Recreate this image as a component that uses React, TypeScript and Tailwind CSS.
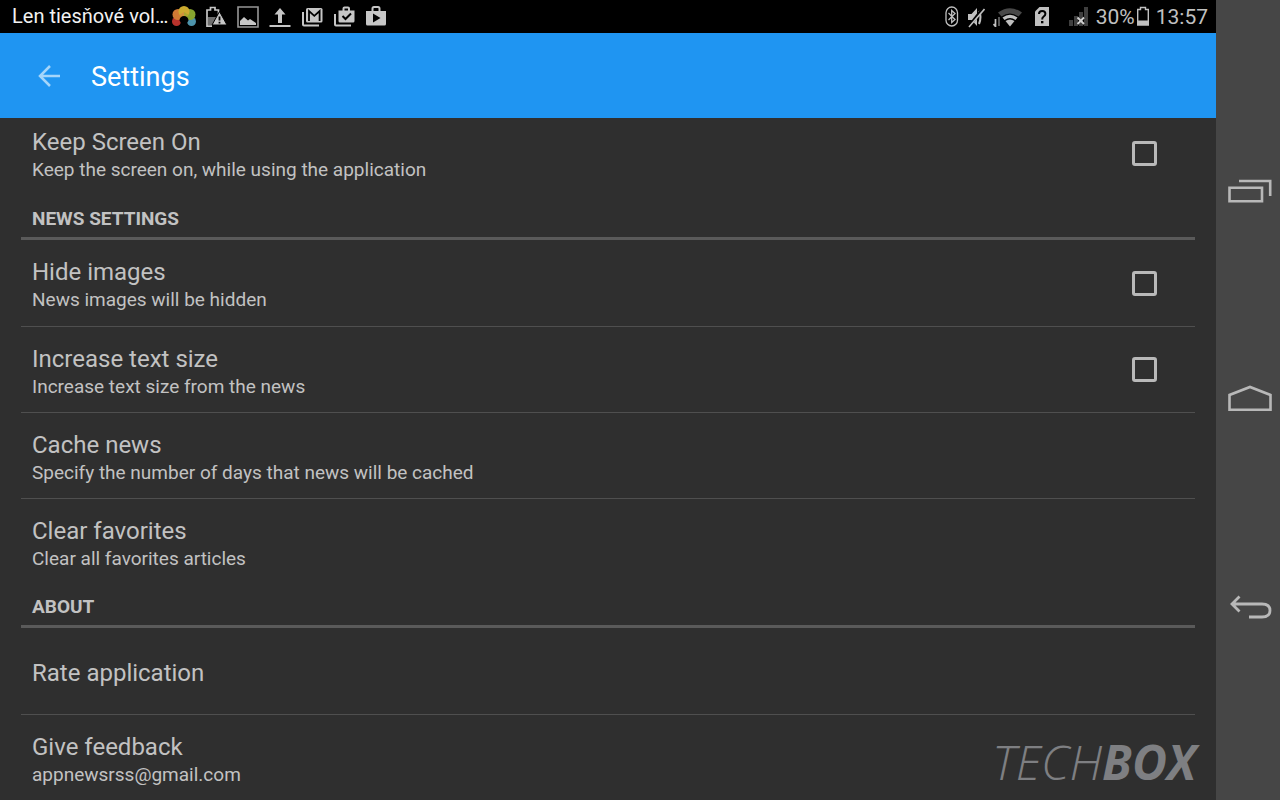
import React, { useState } from 'react'

interface SettingProps {
  title: string;
  summary?: string;
  divider?: boolean;
}

const rowClass = "flex h-[86px] w-full items-center justify-between pl-[11px] pr-[38px] text-left";
const dividerClass = "border-t border-[#4f4f4f]";

function RowText({ title, summary }: SettingProps) {
  return (
    <span className="block pt-1">
      <span className="block text-[24px] leading-[30px]">{title}</span>
      {summary && <span className="block text-[19px] leading-[26px]">{summary}</span>}
    </span>
  );
}

function ToggleRow({ title, summary, divider }: SettingProps) {
  const [checked, setChecked] = useState(false);

  return (
    <label className={`${rowClass} ${divider ? dividerClass : ""}`}>
      <RowText title={title} summary={summary} />
      <input
        type="checkbox"
        checked={checked}
        onChange={(e) => setChecked(e.target.checked)}
        className="size-[25px] shrink-0 appearance-none rounded-[3px] border-3 border-[#b9b9b9] checked:bg-[#1f95f2]"
      />
    </label>
  );
}

function ActionRow({ title, summary, divider }: SettingProps) {
  return (
    <button type="button" className={`${rowClass} ${divider ? dividerClass : ""}`}>
      <RowText title={title} summary={summary} />
    </button>
  );
}

function SectionTitle({ children }: { children: React.ReactNode }) {
  return (
    <h2 className="h-11 border-b-3 border-[#5a5a5a] pl-[11px] text-[19px] leading-[46px] font-bold uppercase">
      {children}
    </h2>
  );
}

function NotificationIcons() {
  return (
    <div className="ml-1 flex shrink-0 gap-2 text-[#c6c6c6]">
      {/* Gallery pinwheel */}
      <svg className="size-6" viewBox="0 0 24 24">
        <circle cx="4.5" cy="16.500" r="4.500" fill="#b8322c" />
        <circle cx="19.500" cy="16.500" r="4.500" fill="#4d93ab" />
        <circle cx="6" cy="9.500" r="5.500" fill="#cf7a34" />
        <circle cx="18" cy="9.500" r="5.500" fill="#86a52f" />
        <circle cx="12" cy="6.500" r="5.500" fill="#cbaa2f" />
        <path d="M7 10l5 2V7z" fill="#d0923a" />
        <path d="M17 10l-5 2V7z" fill="#a9a72f" />
        <path d="M7.500 15.500a4.500 4.500 0 0 1 9 0L15 18l1 4H8l1-4z" fill="#000" />
      </svg>
      {/* Battery warning */}
      <svg className="size-6" viewBox="0 0 24 24" fill="none">
        <path d="M4 12h8v8H4z" fill="#6f6f6f" />
        <path d="M8 21.200H3V5h3.500V2.500h4.500V5h3.500v4" stroke="currentColor" strokeWidth="1.700" />
        <path d="M15.500 6.500 23 20H8z" fill="currentColor" stroke="#000" />
        <path d="M15.500 11.500v4M15.500 16.800v1.800" stroke="#000" strokeWidth="1.800" />
      </svg>
      {/* Screenshot */}
      <svg className="size-6" viewBox="0 0 24 24" fill="none">
        <path d="M2 2h20v20H2z" stroke="#979797" strokeWidth="1.600" />
        <path d="M4 20v-4l4-4 4 3.500 2-1.500 6 4v2z" fill="currentColor" />
      </svg>
      {/* Upload */}
      <svg className="size-6" viewBox="0 0 24 24" fill="currentColor">
        <path d="M12 3l5.500 6.500H14V18h-4V9.500H6.500zM1.500 20h21v2h-21z" />
      </svg>
      {/* Mail */}
      <svg className="size-6" viewBox="0 0 24 24" fill="none">
        <rect x="6" y="3" width="16.500" height="14.500" rx="1.500" fill="currentColor" />
        <path d="M9 16V6l5.300 4.800L19.600 6v10" stroke="#000" strokeWidth="1.800" />
        <path d="M3 7v12.500q0 1 1 1h15" stroke="currentColor" strokeWidth="2" />
      </svg>
      {/* Updated apps */}
      <svg className="size-6" viewBox="0 0 24 24" fill="none">
        <path d="M11.500 6V3.500q0-1 1-1h3.500q1 0 1 1V6" stroke="currentColor" strokeWidth="2" />
        <path d="M6.500 5.500h16V16q0 1.500-1.500 1.500H8q-1.500 0-1.500-1.500z" fill="currentColor" />
        <path d="M10.500 11l3 3 5.500-5.500" stroke="#000" strokeWidth="2" />
        <path d="M3 9v10.500q0 1 1 1h15" stroke="currentColor" strokeWidth="2" />
      </svg>
      {/* Store */}
      <svg className="size-6" viewBox="0 0 24 24" fill="none">
        <path d="M8.500 6V3.500q0-1.500 1.500-1.500h4q1.500 0 1.500 1.500V6" stroke="currentColor" strokeWidth="2" />
        <path d="M2 6h20v13q0 1.500-1.500 1.500h-17Q2 20.500 2 19z" fill="currentColor" />
        <path d="M9 8.500l7.500 4.500L9 17.500z" fill="#000" />
      </svg>
    </div>
  );
}

function SystemIcons() {
  return (
    <div className="flex items-center text-[#c0c0c0]">
      {/* Bluetooth */}
      <svg className="h-6 w-3.5" viewBox="0 0 14 24" fill="none" stroke="currentColor">
        <rect x="1" y="2" width="11.500" height="19" rx="5.700" strokeWidth="1.300" />
        <path d="M3.500 8l6.500 6.500-3.300 3V5.500l3.300 3L3.500 15" strokeWidth="1.300" />
      </svg>
      {/* Muted */}
      <svg className="ml-2 h-6 w-[18px]" viewBox="0 0 18 24" fill="none">
        <path d="M1 9h3.500L10 3v18l-5.500-6H1z" fill="currentColor" />
        <path d="M12 6q3 6 0 13" stroke="currentColor" strokeWidth="2" />
        <path d="M17 2 1.500 22" stroke="#000" strokeWidth="3" />
        <path d="M17.500 4 2 22" stroke="currentColor" strokeWidth="1.600" />
      </svg>
      {/* Wi-Fi */}
      <svg className="ml-2 h-6 w-[30px]" viewBox="0 0 30 24" fill="none">
        <path d="M2.500 14v8M.500 19l2 2.500" stroke="currentColor" strokeWidth="1.700" />
        <path d="M6 12v9" stroke="#555" strokeWidth="2" />
        <path d="M5 7.500q12-8.500 24 0l-3.500 4q-8.500-6-17 0z" fill="#484848" />
        <path d="M9.500 12.500q7.500-5.500 15 0l-2 2.400q-5.500-3.800-11 0z" fill="currentColor" />
        <path d="M12.500 16q4.500-3 9 0L17 21.500z" fill="currentColor" />
      </svg>
      {/* Unknown SIM */}
      <svg className="ml-3 h-6 w-3.5" viewBox="0 0 14 24" fill="none">
        <path d="M4.500 2H14v19H0V6.500z" fill="currentColor" />
        <path d="M4 9q0-3 3.200-3t3.200 2.800q0 1.500-1.700 2.700T7.200 14.500" stroke="#000" strokeWidth="2" />
        <path d="M6 16h2.400v2.300H6z" fill="#000" />
      </svg>
      {/* No signal */}
      <svg className="ml-5 h-6 w-5" viewBox="0 0 20 24" fill="none">
        <path d="M0 15h4v6H0zM5 11h4v10H5zM10 7h4v14h-4zM15 2h4v19h-4z" fill="#3f3f3f" />
        <path d="M8.500 12.500l6.500 6.500M15 12.500 8.500 19" stroke="#d0d0d0" strokeWidth="1.800" />
      </svg>
      <span className="ml-[7px] pt-0.5 text-[21px] leading-[33px]">30%</span>
      <svg className="ml-px h-6 w-3.5" viewBox="0 0 14 24" fill="none">
        <path d="M1.700 20V4.500H4.500v-2h5v2h2.800V20z" stroke="currentColor" strokeWidth="1.400" />
        <path d="M2 15.500h10V20H2z" fill="currentColor" />
      </svg>
      <span className="ml-1.5 pt-0.5 text-[21px] leading-[33px]">13:57</span>
    </div>
  );
}

function StatusBar() {
  return (
    <div className="flex h-[33px] shrink-0 items-center justify-between bg-black pr-2 pl-3">
      <div className="flex min-w-0 items-center">
        <span className="truncate text-[20px] leading-[33px] text-[#f2f2f2]">Len tiesňové vol…</span>
        <NotificationIcons />
      </div>
      <SystemIcons />
    </div>
  );
}

function NavigationBar() {
  return (
    <nav className="flex w-16 shrink-0 flex-col justify-center bg-[#464646] pb-0.5 text-[#b8b8b8]">
      <button type="button" aria-label="Recent apps" className="flex h-52 items-center justify-end pr-2">
        <svg className="h-6 w-11" viewBox="0 0 44 24" fill="none" stroke="currentColor" strokeWidth="2.600">
          <path d="M1.500 8.700h32.500v13.500H1.500zM11 2h31.200V17" />
        </svg>
      </button>
      <button type="button" aria-label="Home" className="flex h-52 items-center justify-end pr-2">
        <svg className="h-7 w-11" viewBox="0 0 44 28" fill="none" stroke="currentColor" strokeWidth="2.600">
          <path d="M1.500 24.700V10L22 2l20.500 8v14.700z" />
        </svg>
      </button>
      <button type="button" aria-label="Back" className="flex h-52 items-center justify-end pr-2">
        <svg className="h-6 w-11" viewBox="0 0 44 24" fill="none" stroke="currentColor" strokeWidth="2.800">
          <path d="M4 9h30q8 0 8 6.500T34 22H21M11.500 1.500 4 9l7.500 7.500" />
        </svg>
      </button>
    </nav>
  );
}

function App() {
  return (
    <div className="flex h-screen overflow-hidden bg-[#2f2f2f] font-[Roboto,'Noto_Sans',sans-serif] text-[#c2c2c2]">
      <div className="relative flex min-w-0 flex-1 flex-col">
        <StatusBar />

        <header className="flex h-[85px] shrink-0 items-center bg-[#1f95f2] pl-9">
          <button type="button" aria-label="Back" className="text-[#a5d5fa]">
            <svg className="size-6" viewBox="0 0 24 24" fill="none" stroke="currentColor" strokeWidth="2.500">
              <path d="M24 12H4M14 2 4 12l10 10" />
            </svg>
          </button>
          <h1 className="ml-[31px] pt-0.5 text-[27px] leading-[36px] text-white">Settings</h1>
        </header>

        <main className="min-h-0 flex-1 overflow-hidden px-[21px]">
          {/* List is scrolled a little below its top */}
          <div className="-mt-2">
            <ToggleRow title="Keep Screen On" summary="Keep the screen on, while using the application" />

            <SectionTitle>News settings</SectionTitle>
            <ToggleRow title="Hide images" summary="News images will be hidden" />
            <ToggleRow title="Increase text size" summary="Increase text size from the news" divider />
            <ActionRow title="Cache news" summary="Specify the number of days that news will be cached" divider />
            <ActionRow title="Clear favorites" summary="Clear all favorites articles" divider />

            <SectionTitle>About</SectionTitle>
            <ActionRow title="Rate application" />
            <ActionRow title="Give feedback" summary="appnewsrss@gmail.com" divider />
          </div>
        </main>

        {/* Watermark */}
        <div className="pointer-events-none absolute right-5 bottom-2.5 font-['Open_Sans',sans-serif] text-[48px] leading-[56px] text-[#7e7f82] italic">
          <span className="font-light">TECH</span>
          <span className="font-bold">BOX</span>
        </div>
      </div>

      <NavigationBar />
    </div>
  );
}

export default App;
